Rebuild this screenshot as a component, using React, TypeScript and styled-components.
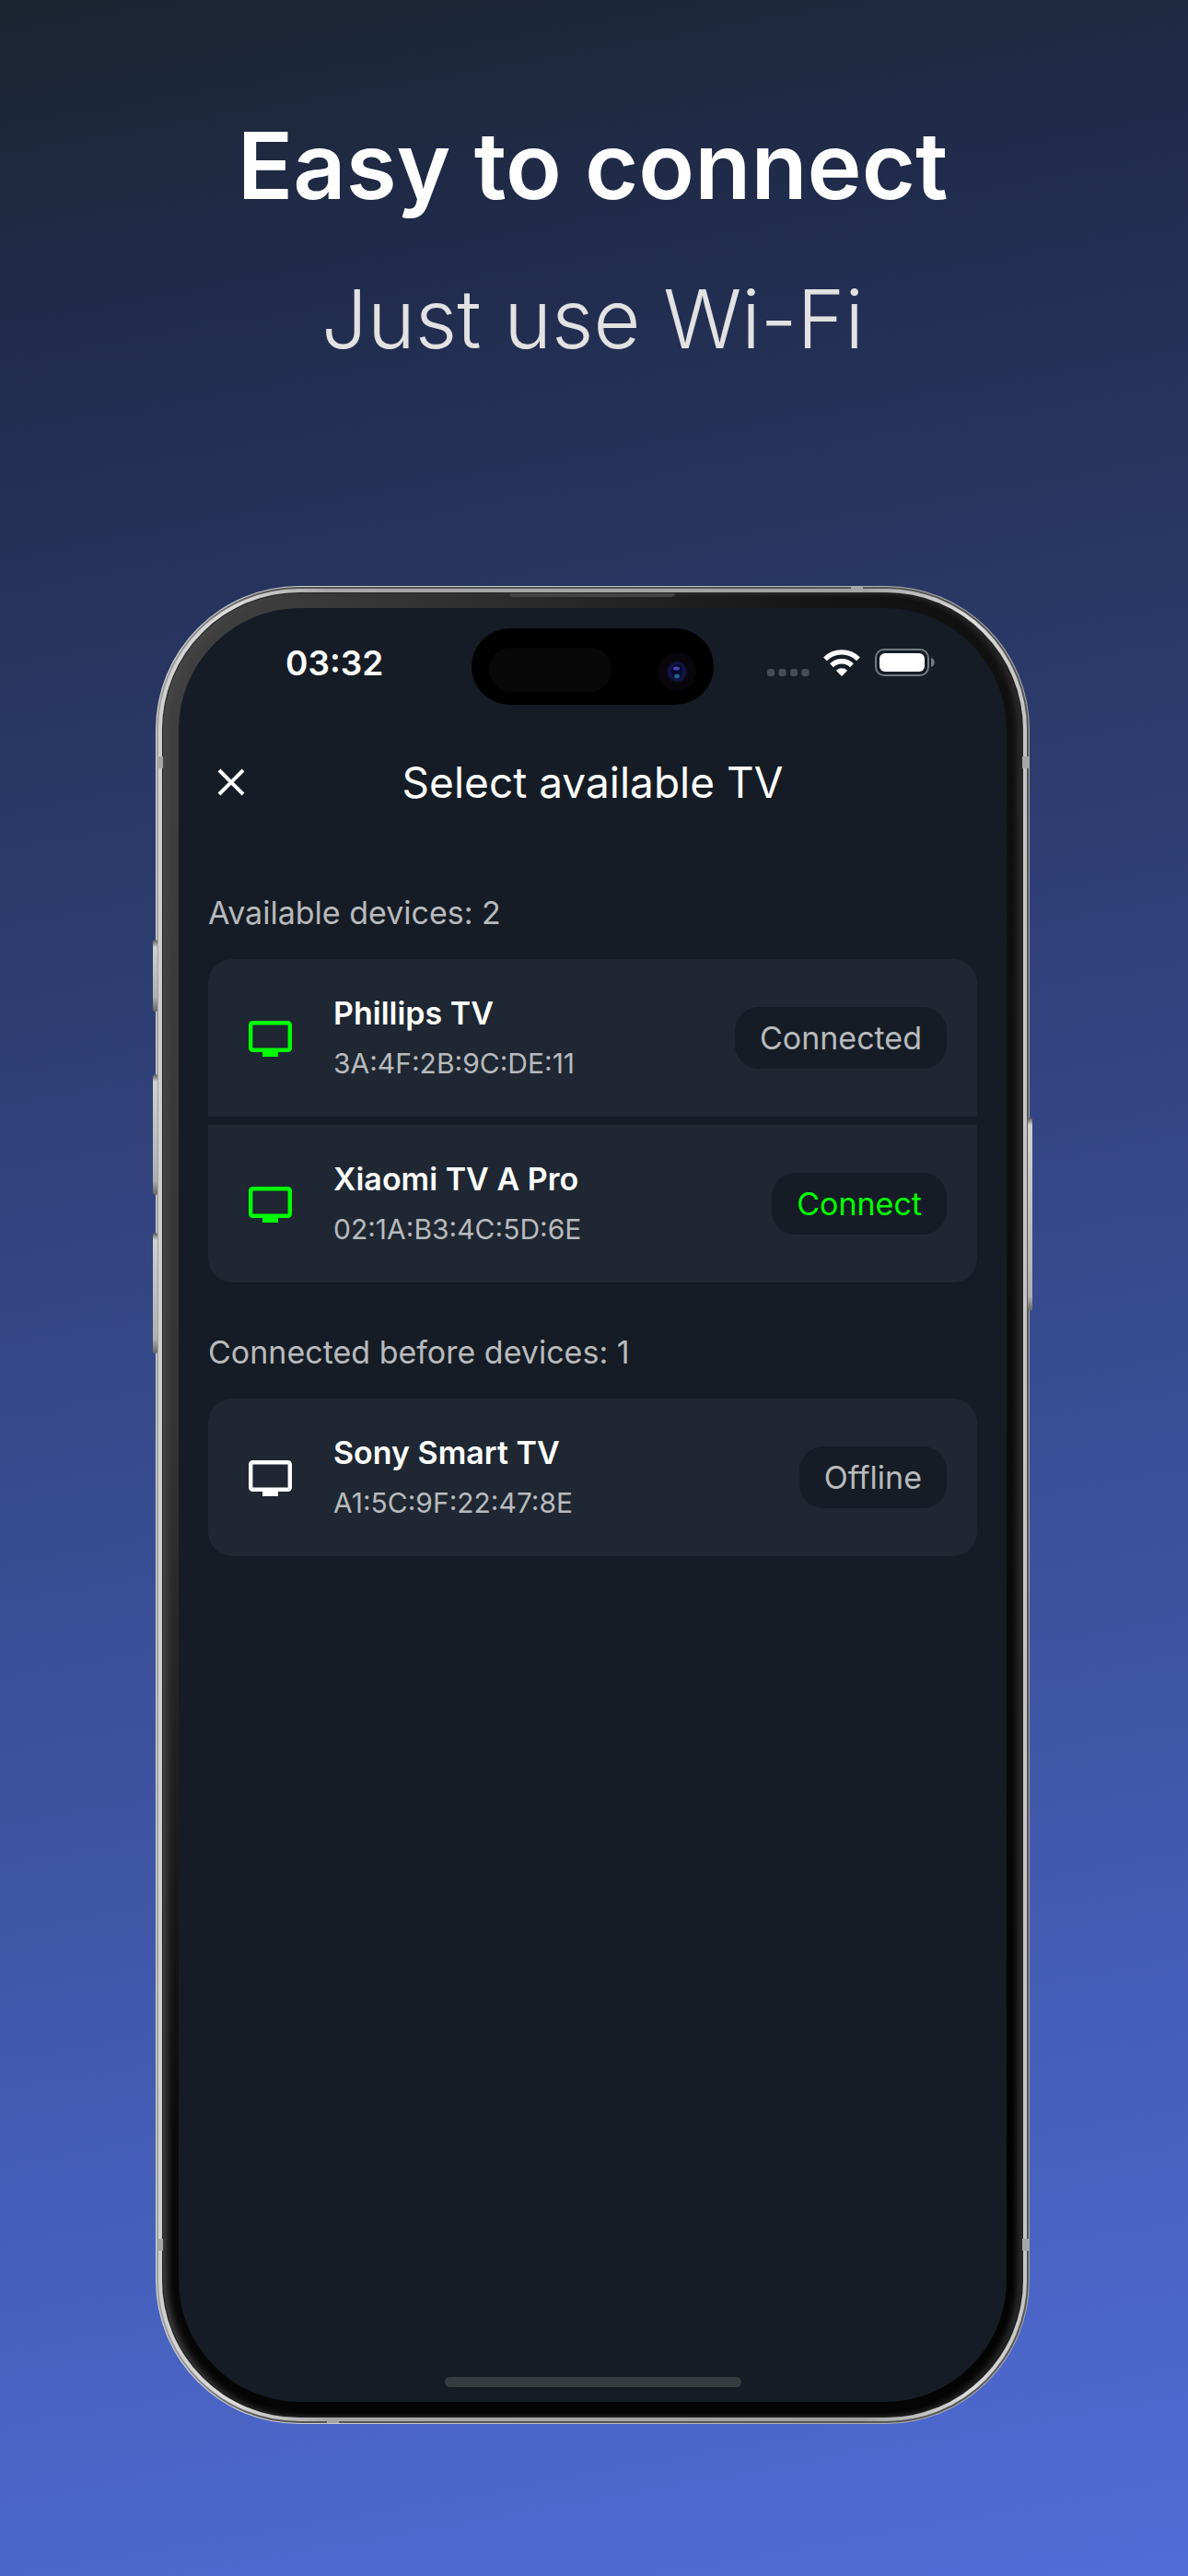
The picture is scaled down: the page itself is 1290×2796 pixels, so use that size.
import React from "react";
import styled, { createGlobalStyle } from "styled-components";

const GlobalStyle = createGlobalStyle`
  *, *::before, *::after { box-sizing: border-box; }
  body {
    margin: 0;
    background: #4c6bd6;
    font-family: Inter, "Liberation Sans", sans-serif;
    -webkit-font-smoothing: antialiased;
  }
  h1, h2, h3, p, ul { margin: 0; padding: 0; }
`;

const Page = styled.main`
  display: flex;
  flex-direction: column;
  min-height: 100vh;
  padding: 120px 172px 165px 169px;
  background: linear-gradient(170deg, #1b2531 0%, #202b4a 11%, #506dd8 100%);
`;

const Hero = styled.header`
  display: flex;
  flex-direction: column;
  align-items: center;
  gap: 50px;
  padding-bottom: 234px;
  text-align: center;
  white-space: nowrap;
`;

const Headline = styled.h1`
  color: #ffffff;
  font-size: 100px;
  font-weight: 600;
  line-height: 120px;
`;

const Tagline = styled.p`
  color: #e2e2e2;
  font-size: 88px;
  font-weight: 300;
  line-height: 112px;
`;

const Phone = styled.section`
  position: relative;
  display: flex;
  aspect-ratio: 949 / 1995;
`;

const Ring = styled.div<{ $width: number; $radius: number; $fill: string }>`
  display: flex;
  flex: 1;
  min-width: 0;
  padding: ${(p) => p.$width}px;
  border-radius: ${(p) => p.$radius}px;
  background: ${(p) => p.$fill};
`;

const Bezel = styled.div`
  display: flex;
  flex: 1;
  min-width: 0;
  padding: 16px 17px;
  border-radius: 148px;
  background:
    linear-gradient(180deg, transparent 0%, rgba(0, 0, 0, 0.2) 45%, rgba(0, 0, 0, 0.85) 85%, #050505 100%),
    linear-gradient(90deg, #424242 0%, #3a3a3a 18%, #262626 50%, #131313 80%, #101010 100%);
  box-shadow: inset 7px 0 8px -3px #484848, inset -8px 0 6px -2px #2a2a2a;
`;

const SideButton = styled.span<{ $side: "left" | "right"; $top: number; $height: number }>`
  position: absolute;
  ${(p) => p.$side}: -3px;
  top: ${(p) => p.$top}px;
  width: 5px;
  height: ${(p) => p.$height}px;
  border-radius: 4px;
  background: linear-gradient(180deg, #555555 0, #d0d0d0 8px, #b0b0b0 calc(100% - 16px), #666666 100%);
`;

const Antenna = styled.span<{ $edge: "left" | "right" | "top" | "bottom"; $at: number }>`
  position: absolute;
  ${(p) => p.$edge}: 1px;
  ${(p) => (p.$edge === "left" || p.$edge === "right"
    ? `top: ${p.$at}px; width: 7px; height: 13px;`
    : `left: ${p.$at}px; width: 13px; height: 6px;`)}
  background: #a6a6a6;
`;

const Speaker = styled.span`
  position: absolute;
  top: 8px;
  left: 384px;
  width: 180px;
  height: 4px;
  border-radius: 0 0 4px 4px;
  background: #444444;
`;

const Screen = styled.div`
  position: relative;
  display: flex;
  flex: 1;
  flex-direction: column;
  min-width: 0;
  padding: 0 32px 16px;
  border-radius: 132px;
  background: #151c25;
`;

const StatusBar = styled.div`
  display: flex;
  align-items: center;
  justify-content: space-between;
  height: 120px;
  padding: 0 45px 0 84px;
`;

const Time = styled.time`
  color: #ffffff;
  font-size: 37px;
  font-weight: 600;
  line-height: 48px;
`;

const Indicators = styled.svg`
  display: block;
  width: 184px;
  height: 32px;
`;

const Island = styled.svg`
  position: absolute;
  top: 22px;
  left: calc(50% - 132px);
  width: 263px;
  height: 83px;
`;

const TopBar = styled.header`
  display: grid;
  grid-template-columns: 50px 1fr 50px;
  align-items: center;
  padding: 41px 0 45px;
`;

const CloseButton = styled.button`
  display: grid;
  place-items: center;
  width: 50px;
  height: 50px;
  padding: 0;
  border: 0;
  background: none;
  color: #ffffff;
`;

const Title = styled.h2`
  color: #ffffff;
  font-size: 46px;
  font-weight: 400;
  line-height: 56px;
  text-align: center;
`;

const Group = styled.section`
  display: flex;
  flex-direction: column;
  gap: 30px;
  padding: 49px 0 7px;
`;

const GroupLabel = styled.h3`
  color: #b8babd;
  font-size: 34px;
  font-weight: 400;
  line-height: 40px;
`;

const DeviceList = styled.ul`
  display: flex;
  flex-direction: column;
  gap: 9px;
  overflow: hidden;
  border-radius: 26px;
  background: #131c24;
  list-style: none;
`;

const Device = styled.li`
  display: flex;
  align-items: center;
  gap: 40px;
  height: 171px;
  padding: 0 33px 0 40px;
  background: #1e2732;
`;

const TvIcon = styled.svg<{ $color: string }>`
  flex: none;
  width: 56px;
  height: 56px;
  color: ${(p) => p.$color};
`;

const DeviceText = styled.div`
  flex: 1;
  min-width: 0;
`;

const DeviceName = styled.p`
  color: #ffffff;
  font-size: 34px;
  font-weight: 600;
  line-height: 54px;
`;

const DeviceAddress = styled.p`
  color: #b8babd;
  font-size: 30px;
  line-height: 54px;
`;

const StatusButton = styled.button<{ $active: boolean }>`
  height: 67px;
  padding: 0 27px;
  border: 0;
  border-radius: 26px;
  background: #151c25;
  color: ${(p) => (p.$active ? "#00ff00" : "#b8babd")};
  font-family: inherit;
  font-size: 34px;
  line-height: 40px;
`;

const HomeIndicator = styled.div`
  width: 322px;
  height: 11px;
  margin: auto auto 0;
  border-radius: 6px;
  background: #363b40;
`;

type DeviceInfo = { name: string; address: string; status: string; online: boolean };

const available: DeviceInfo[] = [
  { name: "Phillips TV", address: "3A:4F:2B:9C:DE:11", status: "Connected", online: true },
  { name: "Xiaomi TV A Pro", address: "02:1A:B3:4C:5D:6E", status: "Connect", online: true },
];

const previous: DeviceInfo[] = [
  { name: "Sony Smart TV", address: "A1:5C:9F:22:47:8E", status: "Offline", online: false },
];

function DeviceGroup({ label, devices }: { label: string; devices: DeviceInfo[] }) {
  return (
    <Group>
      <GroupLabel>{label}: {devices.length}</GroupLabel>
      <DeviceList>
        {devices.map((d) => (
          <Device key={d.address}>
            <TvIcon viewBox="0 0 56 56" $color={d.online ? "#00ff00" : "#ffffff"} aria-hidden="true">
              <rect x="6.2" y="11.2" width="42.6" height="29.6" rx="2.2" fill="none" stroke="currentColor" strokeWidth="4.4" />
              <rect x="19" y="41" width="17" height="7" fill="currentColor" />
            </TvIcon>
            <DeviceText>
              <DeviceName>{d.name}</DeviceName>
              <DeviceAddress>{d.address}</DeviceAddress>
            </DeviceText>
            <StatusButton type="button" $active={d.status === "Connect"}>{d.status}</StatusButton>
          </Device>
        ))}
      </DeviceList>
    </Group>
  );
}

export default function App() {
  return (
    <>
      <GlobalStyle />
      <Page>
        <Hero>
          <Headline>Easy to connect</Headline>
          <Tagline>Just use Wi-Fi</Tagline>
        </Hero>
        <Phone>
          <SideButton $side="left" $top={384} $height={78} />
          <SideButton $side="left" $top={530} $height={131} />
          <SideButton $side="left" $top={702} $height={131} />
          <SideButton $side="right" $top={577} $height={210} />
          <Ring $width={1} $radius={156} $fill="linear-gradient(90deg, #d6d6d6, #a8a8a8)">
            <Ring $width={2} $radius={155} $fill="linear-gradient(90deg, #a2a2a2 0, #999999 20px, #555555 120px, #555555 100%)">
              <Ring $width={4} $radius={153} $fill="linear-gradient(90deg, #cfcfcf 0, #dcdcdc 80px, #a8a8a8 180px, #a0a0a0 calc(100% - 180px), #dddddd calc(100% - 60px), #c4c4c4 100%)">
                <Ring $width={1} $radius={149} $fill="#222222">
                  <Bezel>
                    <Screen>
                      <StatusBar>
                        <Time>03:32</Time>
                        <Indicators viewBox="0 0 184 32" aria-hidden="true">
                          <g fill="#474d55">
                            <rect x="1" y="22" width="8" height="8" rx="2.5" />
                            <rect x="13.5" y="22" width="8" height="8" rx="2.5" />
                            <rect x="26" y="22" width="8" height="8" rx="2.5" />
                            <rect x="38.5" y="22" width="8" height="8" rx="2.5" />
                          </g>
                          <g fill="none" stroke="#ffffff" strokeWidth="5.4">
                            <path d="M64 11.300a25.6 25.6 0 0 1 36 0" />
                            <path d="M71 18.200a15.8 15.8 0 0 1 22 0" />
                          </g>
                          <path d="M82 30l-6.2-6.3a9 9 0 0 1 12.4 0z" fill="#ffffff" />
                          <rect x="119" y="1" width="57" height="28" rx="9" fill="none" stroke="#747981" strokeWidth="2" />
                          <rect x="123" y="5" width="49" height="20" rx="6" fill="#ffffff" />
                          <path d="M179 10c5 1.500 5 8.500 0 10z" fill="#747981" />
                        </Indicators>
                      </StatusBar>
                      <Island viewBox="0 0 263 83" aria-hidden="true">
                        <defs>
                          <radialGradient id="lens">
                            <stop offset="0" stopColor="#15306e" />
                            <stop offset="0.6" stopColor="#141650" />
                            <stop offset="1" stopColor="#0a1233" />
                          </radialGradient>
                        </defs>
                        <rect width="263" height="83" rx="41.5" fill="#000000" />
                        <rect x="19" y="21" width="133" height="48" rx="24" fill="#080808" />
                        <circle cx="223" cy="47" r="21" fill="#08060b" />
                        <circle cx="223" cy="47" r="11" fill="url(#lens)" />
                        <ellipse cx="223" cy="47" rx="6" ry="8" fill="#060a2c" />
                        <ellipse cx="222.500" cy="43.500" rx="3.500" ry="2" fill="#4a45b0" />
                        <ellipse cx="223" cy="52" rx="3" ry="2.500" fill="#24608c" />
                      </Island>
                      <TopBar>
                        <CloseButton type="button" aria-label="Close">
                          <svg width="30" height="30" viewBox="0 0 30 30" aria-hidden="true">
                            <path d="M2 2l26 26M28 2L2 28" stroke="currentColor" strokeWidth="4" />
                          </svg>
                        </CloseButton>
                        <Title>Select available TV</Title>
                      </TopBar>
                      <DeviceGroup label="Available devices" devices={available} />
                      <DeviceGroup label="Connected before devices" devices={previous} />
                      <HomeIndicator />
                    </Screen>
                  </Bezel>
                </Ring>
              </Ring>
            </Ring>
          </Ring>
          <Antenna $edge="left" $at={185} />
          <Antenna $edge="right" $at={185} />
          <Antenna $edge="left" $at={1794} />
          <Antenna $edge="right" $at={1794} />
          <Antenna $edge="top" $at={755} />
          <Antenna $edge="bottom" $at={186} />
          <Speaker />
        </Phone>
      </Page>
    </>
  );
}
